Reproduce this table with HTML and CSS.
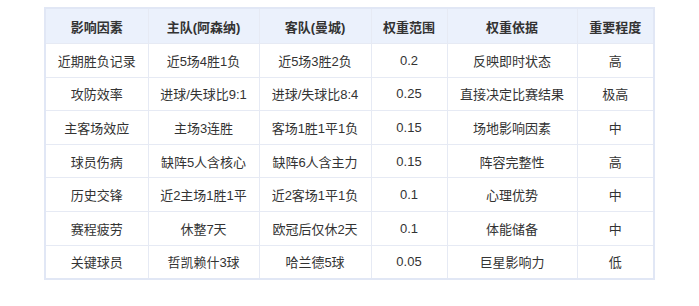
FILE: index.html
```html
<!DOCTYPE html>
<html lang="zh">
  <head>
    <meta charset="UTF-8" />
    <title>影响因素权重</title>
    <link rel="stylesheet" href="styles.css">
  </head>
  <body>
    <!-- Factor weight table -->
    <table class="factors">
      <colgroup>
        <col style="width: 103px">
        <col style="width: 111px">
        <col style="width: 112px">
        <col style="width: 76px">
        <col style="width: 130px">
        <col style="width: 77px">
      </colgroup>
      <thead>
        <tr>
          <th>影响因素</th>
          <th>主队(阿森纳)</th>
          <th>客队(曼城)</th>
          <th>权重范围</th>
          <th>权重依据</th>
          <th>重要程度</th>
        </tr>
      </thead>
      <tbody>
        <tr><td>近期胜负记录</td><td>近5场4胜1负</td><td>近5场3胜2负</td><td>0.2</td><td>反映即时状态</td><td>高</td></tr>
        <tr><td>攻防效率</td><td>进球/失球比9:1</td><td>进球/失球比8:4</td><td>0.25</td><td>直接决定比赛结果</td><td>极高</td></tr>
        <tr><td>主客场效应</td><td>主场3连胜</td><td>客场1胜1平1负</td><td>0.15</td><td>场地影响因素</td><td>中</td></tr>
        <tr><td>球员伤病</td><td>缺阵5人含核心</td><td>缺阵6人含主力</td><td>0.15</td><td>阵容完整性</td><td>高</td></tr>
        <tr><td>历史交锋</td><td>近2主场1胜1平</td><td>近2客场1平1负</td><td>0.1</td><td>心理优势</td><td>中</td></tr>
        <tr><td>赛程疲劳</td><td>休整7天</td><td>欧冠后仅休2天</td><td>0.1</td><td>体能储备</td><td>中</td></tr>
        <tr><td>关键球员</td><td>哲凯赖什3球</td><td>哈兰德5球</td><td>0.05</td><td>巨星影响力</td><td>低</td></tr>
      </tbody>
    </table>
  </body>
</html>
```

FILE: styles.css
```css
/* General styles */
body {
    margin: 0;
    padding: 7px 0 0;
    background: #fff;
    font-family: "Liberation Sans", "Noto Sans CJK SC", sans-serif;
    font-size: 13px;
    color: #333;
}

/* Table */
.factors {
    margin: 0 auto;
    width: 609px;
    table-layout: fixed;
    border-collapse: collapse;
    border: 2px solid #e1e7f5;
}

.factors th,
.factors td {
    border: 1px solid #e6eaf4;
    text-align: center;
    padding: 0 4px;
    white-space: nowrap;
}

.factors th {
    height: 34px;
    background: #ebf1fc;
    font-weight: bold;
    color: #333;
}

.factors td {
    height: 32.6px;
}
```
